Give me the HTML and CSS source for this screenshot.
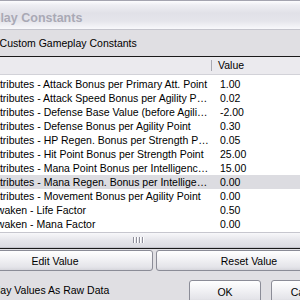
FILE: index.html
```html
<!DOCTYPE html>
<html lang="en">
<head>
<meta charset="UTF-8">
<meta name="viewport" content="width=device-width, initial-scale=1.0">
<title>Gameplay Constants</title>
<link rel="stylesheet" href="styles.css">
</head>
<body>

<div class="window">
    <div class="titlebar">Gameplay Constants</div>

    <div class="face">
        <label class="check top-check"><span class="box"></span>Use Custom Gameplay Constants</label>

        <div class="list">
            <div class="list-head">
                <div class="head-name"></div>
                <span class="sep"></span>
                <div class="head-value">Value</div>
            </div>
            <div class="rows">
                <div class="row"><div class="col-name">Attributes - Attack Bonus per Primary Att. Point</div><div class="col-value">1.00</div></div>
                <div class="row"><div class="col-name">Attributes - Attack Speed Bonus per Agility Point</div><div class="col-value">0.02</div></div>
                <div class="row"><div class="col-name">Attributes - Defense Base Value (before Agility Bonus)</div><div class="col-value">-2.00</div></div>
                <div class="row"><div class="col-name">Attributes - Defense Bonus per Agility Point</div><div class="col-value">0.30</div></div>
                <div class="row"><div class="col-name">Attributes - HP Regen. Bonus per Strength Point</div><div class="col-value">0.05</div></div>
                <div class="row"><div class="col-name">Attributes - Hit Point Bonus per Strength Point</div><div class="col-value">25.00</div></div>
                <div class="row"><div class="col-name">Attributes - Mana Point Bonus per Intelligence Point</div><div class="col-value">15.00</div></div>
                <div class="row selected"><div class="col-name">Attributes - Mana Regen. Bonus per Intelligence Point</div><div class="col-value">0.00</div></div>
                <div class="row"><div class="col-name">Attributes - Movement Bonus per Agility Point</div><div class="col-value">0.00</div></div>
                <div class="row"><div class="col-name">Awaken - Life Factor</div><div class="col-value">0.50</div></div>
                <div class="row"><div class="col-name">Awaken - Mana Factor</div><div class="col-value">0.00</div></div>
            </div>
            <div class="hscroll">
                <div class="arrow">&#9666;</div>
                <div class="thumb"><span class="grip"></span></div>
            </div>
        </div>

        <div class="actions">
            <button class="btn edit">Edit Value</button>
            <button class="btn reset">Reset Value</button>
        </div>

        <div class="footer">
            <label class="check raw-check"><span class="box"></span>Display Values As Raw Data</label>
            <div class="dlg-buttons">
                <button class="btn">OK</button>
                <button class="btn">Cancel</button>
            </div>
        </div>
    </div>
</div>

</body>
</html>
```

FILE: styles.css
```css
body {
    margin: 0;
    background-color: #e0dfe3;
    font-family: "Liberation Sans", Arial, sans-serif;
    font-size: 10.5px;
    color: #000000;
    overflow: hidden;
}

.window {
    width: 400px;
    margin-left: -50px;
}

/* inactive title bar, silver theme */
.titlebar {
    height: 18px;
    padding: 8px 0 2px 8px;
    border-top: 1px solid #a4a4b0;
    border-bottom: 1px solid #c4c4cc;
    background: linear-gradient(#fdfdff 0px, #eeeef3 4px, #e1e1e8 12px, #e5e5eb 20px, #f8f8fb 28px);
    font-size: 12.5px;
    font-weight: bold;
    line-height: 18px;
    color: #a9a9b5;
    white-space: nowrap;
}

.face {
    padding: 5px 7px 0 7px;
}

.check {
    display: flex;
    align-items: center;
    gap: 4px;
    height: 16px;
    line-height: 16px;
    white-space: nowrap;
    box-sizing: border-box;
}

.top-check {
    padding-left: 4px;
}

.box {
    width: 11px;
    height: 11px;
    border: 1px solid #1c5180;
    background-color: #ffffff;
}

.list {
    margin-top: 5px;
    border: 1px solid #1a1a1a;
    background-color: #ffffff;
}

.list-head {
    display: flex;
    height: 17px;
    line-height: 17px;
    background-color: #ebeaee;
    border-bottom: 1px solid #d2d2d8;
}

.head-name {
    width: 253px;
    flex: none;
}

.sep {
    width: 1px;
    margin: 3px 0;
    background-color: #a9a9b2;
}

.head-value {
    padding-left: 6px;
}

.rows {
    padding: 2px 0 1px 0;
}

.row {
    display: flex;
    height: 14px;
    line-height: 14px;
}

.row.selected {
    background-color: #dcdce1;
}

.col-name {
    width: 253px;
    flex: none;
    padding: 0 1px 0 32px;
    box-sizing: border-box;
    white-space: nowrap;
    overflow: hidden;
    text-overflow: ellipsis;
}

.col-value {
    padding-left: 9px;
}

.hscroll {
    display: flex;
    height: 16px;
    background-color: #f0f0f4;
}

.arrow {
    width: 16px;
    font-size: 8px;
    line-height: 16px;
    text-align: center;
    color: #4d4d57;
    background-color: #e4e4ea;
}

.thumb {
    width: 330px;
    display: flex;
    justify-content: center;
    align-items: center;
    box-sizing: border-box;
    border: 1px solid #c6c6ce;
    border-radius: 2px;
    background: linear-gradient(#f7f7fa, #e6e6eb 50%, #dcdce2);
}

.grip {
    width: 12px;
    height: 6px;
    background: repeating-linear-gradient(to right, #8e8e9a 0px, #8e8e9a 1px, #ffffff 1px, #ffffff 2px, transparent 2px, transparent 3px);
}

.actions {
    display: flex;
    gap: 3px;
    margin-top: 1px;
}

.btn {
    display: block;
    height: 21px;
    padding: 1px 0 0 0;
    box-sizing: border-box;
    border: 1px solid #8b8c97;
    border-radius: 3px;
    background: linear-gradient(#ffffff, #f1f1f4 45%, #e4e4e9 85%, #d6d6dc);
    font-family: inherit;
    font-size: 10.5px;
    line-height: 18px;
    color: #000000;
}

.edit {
    width: 196px;
}

.reset {
    width: 186px;
}

.footer {
    display: flex;
    align-items: flex-start;
    margin-top: 9px;
}

.raw-check {
    width: 238px;
    height: 18px;
    padding: 2px 0 0 3px;
}

.dlg-buttons {
    display: flex;
    gap: 10px;
}

.dlg-buttons .btn {
    width: 72px;
    height: 23px;
    line-height: 20px;
}
```
